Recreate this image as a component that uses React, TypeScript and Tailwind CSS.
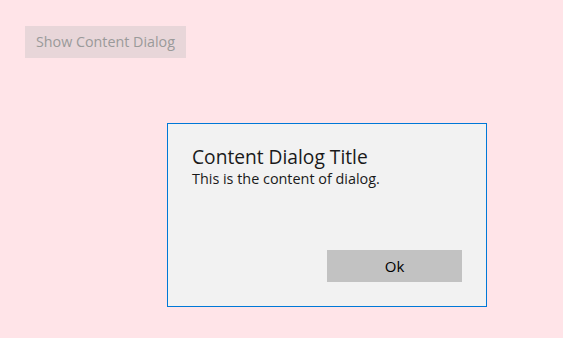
export default function App() {
  return (
    <div
      className="flex h-[338px] w-[563px] flex-col bg-[#ffe4e8] text-black"
      style={{ fontFamily: '"Open Sans", "Noto Sans", sans-serif' }}
    >
      {/* Trigger */}
      <div className="pl-[25px] pt-[26px]">
        <button className="flex h-[32px] w-[161px] items-center justify-center bg-[#e8d6d9] text-[14.3px] text-[#9a9a9a]">
          Show Content Dialog
        </button>
      </div>

      {/* Dialog */}
      <div className="ml-[167px] mt-[65px] flex h-[184px] w-[320px] flex-col border border-[#0078d7] bg-[#f2f2f2] px-[24px] pb-[24px] pt-[20px]">
        <h2 className="text-[19.2px] leading-[26px] text-[#1a1a1a]">Content Dialog Title</h2>
        <p className="text-[14.4px] leading-[18px] text-[#1a1a1a]">This is the content of dialog.</p>
        <div className="mt-auto flex justify-end">
          <button className="flex h-[32px] w-[135px] items-center justify-center bg-[#c2c2c2] text-[15px] text-black">
            Ok
          </button>
        </div>
      </div>
    </div>
  );
}
